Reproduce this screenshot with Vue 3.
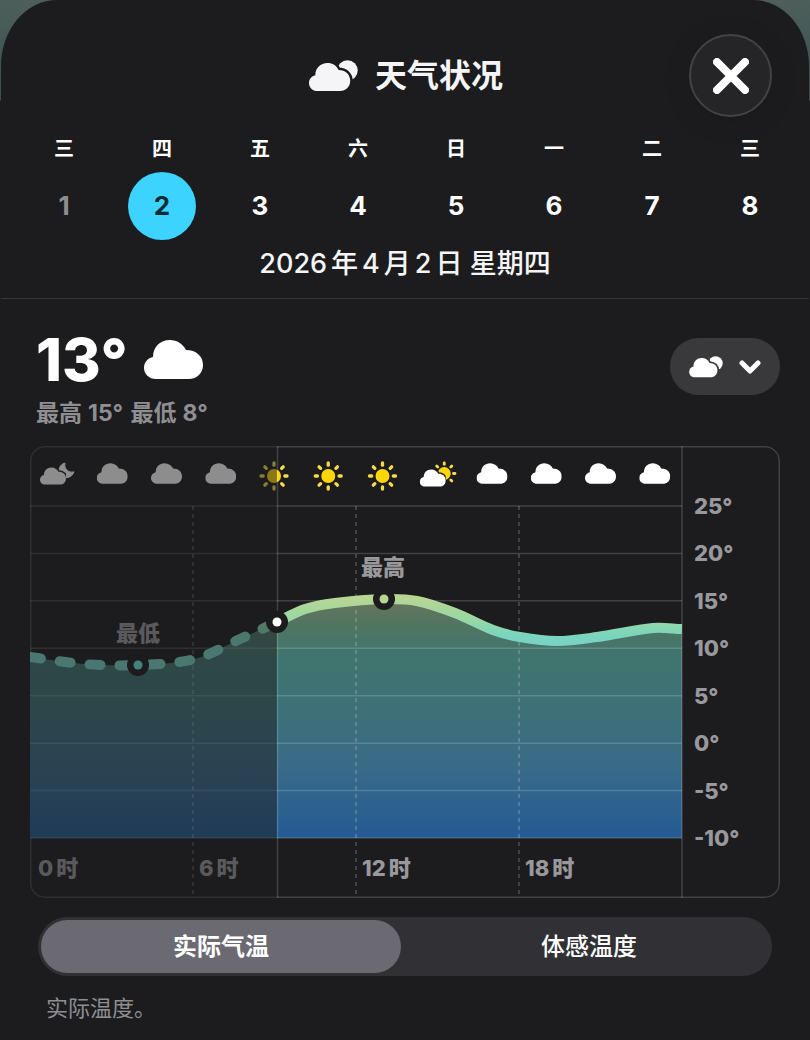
<script setup>
import { ref } from 'vue'

const days = [
  { week: '三', date: 1, past: true },
  { week: '四', date: 2 },
  { week: '五', date: 3 },
  { week: '六', date: 4 },
  { week: '日', date: 5 },
  { week: '一', date: 6 },
  { week: '二', date: 7 },
  { week: '三', date: 8 },
]
const selected = ref(2)
const mode = ref('actual')

const conditions = ['moon', 'cloud', 'cloud', 'cloud', 'sun', 'sun', 'sun', 'partly', 'cloud', 'cloud', 'cloud', 'cloud']
const temps = [25, 20, 15, 10, 5, 0, -5, -10]
const hours = [0, 6, 12, 18]
const gridY = (t) => 392 - ((t + 10) * 332) / 35
const hourX = (h) => (h * 652) / 24

// Temperature samples in chart units
const points = [
  [0, 211], [54, 218], [108, 219], [165, 213], [210, 193], [247, 176], [275, 163], [305, 157],
  [354, 153], [387, 155], [425, 167], [463, 184], [490, 191], [527, 195], [567, 191], [623, 182], [652, 183],
]
const smooth = (list, from, to) => {
  const slope = (i) => {
    const a = list[Math.max(0, i - 1)]
    const b = list[Math.min(list.length - 1, i + 1)]
    return (b[1] - a[1]) / (b[0] - a[0])
  }
  let d = `M${list[from][0]} ${list[from][1]}`
  for (let i = from; i < to; i++) {
    const [x1, y1] = list[i]
    const [x2, y2] = list[i + 1]
    const step = (x2 - x1) / 3
    d += `C${x1 + step} ${y1 + step * slope(i)} ${x2 - step} ${y2 - step * slope(i + 1)} ${x2} ${y2}`
  }
  return d
}
const pastLine = smooth(points, 0, 5)
const nextLine = smooth(points, 5, points.length - 1)
const area = smooth(points, 0, points.length - 1) + 'V392H0Z'
</script>

<template>
  <svg class="symbols" width="0" height="0" aria-hidden="true">
    <symbol id="cloud" viewBox="0 0 59 39">
      <path fill="currentColor" d="M12 39C5 39 0 34 0 28C0 22 4 18 9 17C9 7 16 0 26 0C33 0 39 4 42 10C52 10 59 16 59 25C59 33 53 39 44.500 39Z" />
    </symbol>
    <symbol id="clouds" viewBox="0 0 49 32">
      <circle cx="38.500" cy="10.500" r="10.200" fill="currentColor" />
      <path fill="currentColor" class="cut" stroke-width="5" d="M8.500 31C3.500 31 0 27.500 0 23.200C0 19 2.600 16 6.300 15.200C6.300 8 11.500 3 18.500 3C23.500 3 27.500 5.600 29.600 10C36.500 10 41.200 14.500 41.200 20.800C41.200 26.800 37 31 31 31Z" />
      <path fill="currentColor" d="M8.500 31C3.500 31 0 27.500 0 23.200C0 19 2.600 16 6.300 15.200C6.300 8 11.500 3 18.500 3C23.500 3 27.500 5.600 29.600 10C36.500 10 41.200 14.500 41.200 20.800C41.200 26.800 37 31 31 31Z" />
    </symbol>
    <symbol id="sun" viewBox="-16 -16 32 32">
      <circle r="7" fill="#ffd60a" />
      <path
        v-for="a in 8" :key="a" d="M0 -10.800V-13" :transform="`rotate(${a * 45})`"
        stroke="#f7dc4a" stroke-width="3.300" stroke-linecap="round"
      />
    </symbol>
    <symbol id="partly" viewBox="0 0 38 28">
      <circle cx="24.500" cy="12.500" r="6.500" fill="#ffd60a" />
      <path
        v-for="a in [-45, 0, 45, 90, 135]" :key="a" d="M24.500 3.300V1.800" :transform="`rotate(${a} 24.500 12.500)`"
        stroke="#f7dc4a" stroke-width="2.800" stroke-linecap="round"
      />
      <use href="#cloud" x="0" y="8" width="26" height="18" class="cut" stroke-width="7" />
      <use href="#cloud" x="0" y="8" width="26" height="18" />
    </symbol>
    <symbol id="moon" viewBox="0 0 38 28">
      <path fill="currentColor" stroke="currentColor" stroke-linejoin="round" d="M25 2C19 3.500 17.500 10.500 20.500 14C24.500 18.500 32 17 34 10.800C28.500 12.500 23.500 7.500 25 2Z" />
      <use href="#cloud" x="0" y="6" width="26" height="18" class="cut" stroke-width="7" />
      <use href="#cloud" x="0" y="6" width="26" height="18" />
    </symbol>
  </svg>

  <main class="sheet">
    <header class="header">
      <div class="title-bar">
        <h1 class="title">
          <svg class="title-icon" aria-hidden="true"><use href="#clouds" /></svg>
          天气状况
        </h1>
        <button class="close" type="button" aria-label="关闭">
          <svg viewBox="0 0 36 36" width="36" height="36" aria-hidden="true">
            <path d="M4 4L32 32M32 4L4 32" stroke="#fff" stroke-width="8" stroke-linecap="round" />
          </svg>
        </button>
      </div>
      <div class="days">
        <button
          v-for="d in days" :key="d.date" type="button" class="day"
          :class="{ past: d.past, active: d.date === selected }" @click="selected = d.date"
        >
          <span class="week">{{ d.week }}</span>
          <span class="date">{{ d.date }}</span>
        </button>
      </div>
      <p class="full-date"><span class="num first">2026</span>年<span class="num">4</span>月<span class="num">2</span>日 星期四</p>
    </header>

    <section class="body">
      <div class="summary">
        <div>
          <div class="now">13°<svg class="now-icon" aria-hidden="true"><use href="#cloud" /></svg></div>
          <p class="range">最高<span class="deg">15°</span> 最低<span class="deg">8°</span></p>
        </div>
        <button class="picker" type="button" aria-label="选择天气数据">
          <svg class="picker-icon" aria-hidden="true"><use href="#clouds" /></svg>
          <svg viewBox="0 0 22 14" width="22" height="14" fill="none" aria-hidden="true">
            <path d="M3 3L11 11L19 3" stroke="#fff" stroke-width="5" stroke-linecap="round" stroke-linejoin="round" />
          </svg>
        </button>
      </div>

      <svg class="chart" viewBox="0 0 750 452" role="img" aria-label="每小时气温">
        <defs>
          <linearGradient id="fill" gradientUnits="userSpaceOnUse" x1="0" y1="152" x2="0" y2="392">
            <stop offset="0" stop-color="#6a745a" />
            <stop offset="0.120" stop-color="#4f7562" />
            <stop offset="0.240" stop-color="#40756f" />
            <stop offset="0.480" stop-color="#3d7078" />
            <stop offset="0.700" stop-color="#396b88" />
            <stop offset="1" stop-color="#245a93" />
          </linearGradient>
          <linearGradient id="line" gradientUnits="userSpaceOnUse" x1="0" y1="152" x2="0" y2="196">
            <stop offset="0" stop-color="#b7d694" />
            <stop offset="0.500" stop-color="#98d8a4" />
            <stop offset="0.850" stop-color="#7ad5bd" />
            <stop offset="1" stop-color="#79d3c4" />
          </linearGradient>
          <clipPath id="frame"><rect x="0" y="0" width="750" height="452" rx="15" /></clipPath>
          <clipPath id="plot"><rect x="0" y="0" width="652" height="452" /></clipPath>
        </defs>

        <g clip-path="url(#frame)">
          <rect class="frame" x="0.750" y="0.750" width="748.500" height="450.500" rx="14" />
          <path :d="area" fill="url(#fill)" />
          <path v-for="t in temps" :key="t" class="grid" :d="`M0 ${gridY(t)}H652`" />
          <path v-for="h in hours.slice(1)" :key="h" class="grid dashed" :d="`M${hourX(h)} 60V452`" />
          <path class="grid" d="M652 0V452" />
          <g clip-path="url(#plot)" class="curve">
            <path :d="pastLine" stroke="url(#line)" stroke-dasharray="11 19" stroke-linecap="round" />
            <path :d="nextLine" stroke="url(#line)" />
          </g>

          <template v-for="(c, i) in conditions" :key="i">
            <use v-if="c === 'cloud'" href="#cloud" :x="12.500 + i * 54.250" y="17" width="31" height="21" />
            <use v-else-if="c === 'sun'" href="#sun" :x="11 + i * 54.250" y="14" width="32" height="32" />
            <use v-else :href="'#' + c" :x="10 + i * 54.250" y="15" width="38" height="28" />
          </template>

          <text class="label" x="108" y="195" text-anchor="middle">最低</text>
          <text v-for="h in hours" :key="h" class="label" :x="hourX(h) + (h ? 6 : 8)" y="430">{{ h }}<tspan dx="3">时</tspan></text>
          <rect class="shade" width="247" height="452" />
        </g>

        <text class="label" x="353" y="129" text-anchor="middle">最高</text>
        <text v-for="t in temps" :key="t" class="label" x="664" :y="gridY(t) + 8">{{ t }}°</text>

        <path class="grid" d="M247.500 0V452" />
        <circle class="halo" cx="108" cy="219" r="11" />
        <circle cx="108" cy="219" r="4.500" fill="#45827f" />
        <circle class="halo" cx="247" cy="176" r="11" />
        <circle cx="247" cy="176" r="4.500" fill="#fff" />
        <circle class="halo" cx="354" cy="153" r="11" />
        <circle cx="354" cy="153" r="4.500" fill="#b7d694" />
      </svg>

      <div class="segments" role="radiogroup" aria-label="温度类型">
        <label class="segment" :class="{ on: mode === 'actual' }">
          <input v-model="mode" type="radio" name="mode" value="actual" />实际气温
        </label>
        <label class="segment" :class="{ on: mode === 'feels' }">
          <input v-model="mode" type="radio" name="mode" value="feels" />体感温度
        </label>
      </div>
      <p class="note">实际温度。</p>
    </section>
  </main>
</template>

<style>
body {
  background: linear-gradient(#4e5f5b, #35504e 100px, #1c1c1e 101px);
}
</style>

<style scoped>
.symbols {
  position: absolute;
}
.cut {
  stroke: var(--surface);
}
.sheet {
  --surface: #1c1c1e;
  box-sizing: border-box;
  min-height: 100vh;
  margin: 0 1px;
  border-radius: 56px 56px 0 0 / 66px 66px 0 0;
  background: var(--surface);
  color: #fff;
  font-family: Inter, "Noto Sans CJK SC", sans-serif;
  overflow: hidden;
}
button {
  padding: 0;
  border: 0;
  background: none;
  color: inherit;
  font: inherit;
  cursor: pointer;
}
.header {
  border-bottom: 1px solid #363638;
}
.title-bar {
  display: grid;
  grid-template-columns: 1fr auto 1fr;
  align-items: center;
  padding: 34px 37px 0;
}
.title {
  grid-column: 2;
  display: flex;
  align-items: center;
  gap: 17px;
  margin: 0;
  padding: 1px 0 0 2px;
  color: #f5f5f7;
  font-size: 32px;
  line-height: 40px;
  font-weight: 700;
}
.title-icon {
  width: 49px;
  height: 32px;
}
.close {
  justify-self: end;
  display: grid;
  place-items: center;
  box-sizing: border-box;
  width: 83px;
  height: 83px;
  border: 2px solid #434345;
  border-radius: 50%;
  background: #252527;
  box-shadow: 0 4px 30px rgba(0, 0, 0, 0.1);
}
.days {
  display: grid;
  grid-template-columns: repeat(8, 1fr);
  padding: 17px 10px 0 14px;
}
.day {
  display: flex;
  flex-direction: column;
  align-items: center;
  gap: 7px;
}
.week {
  font-size: 20px;
  line-height: 31px;
  font-weight: 700;
}
.date {
  width: 68px;
  border-radius: 50%;
  font-size: 26px;
  line-height: 68px;
  font-weight: 700;
}
.past .date {
  color: #8e8e90;
}
.active .date {
  background: #3cd3fe;
  color: #0e2a36;
}
.full-date {
  margin: 0;
  padding: 5px 0 15px;
  color: #f5f5f7;
  font-size: 27px;
  line-height: 38px;
  font-weight: 500;
  text-align: center;
}
.num {
  margin: 0 4px;
}
.num.first {
  margin-left: 0;
}
.body {
  padding: 39px 29px 16px;
}
.summary {
  display: flex;
  justify-content: space-between;
  align-items: flex-start;
  padding-left: 6px;
}
.now {
  display: flex;
  align-items: center;
  gap: 16px;
  font-size: 59px;
  line-height: 43px;
  font-weight: 800;
}
.now-icon {
  width: 59px;
  height: 39px;
}
.range {
  margin: 15px 0 16px;
  color: #8e8e93;
  font-size: 23px;
  line-height: 34px;
  font-weight: 700;
}
.deg {
  margin: 0 2px 0 6px;
}
.picker {
  --surface: #39393b;
  display: flex;
  align-items: center;
  justify-content: center;
  gap: 16px;
  width: 110px;
  height: 57px;
  border-radius: 29px;
  background: var(--surface);
}
.picker-icon {
  width: 34px;
  height: 22px;
}
.chart {
  display: block;
  width: 100%;
  height: auto;
}
.frame,
.grid {
  fill: none;
  stroke: rgba(255, 255, 255, 0.17);
  stroke-width: 1.5px;
}
.dashed {
  stroke: rgba(255, 255, 255, 0.24);
  stroke-dasharray: 4 4;
}
.curve {
  fill: none;
  stroke-width: 10px;
}
.label {
  fill: #98989d;
  font-size: 22px;
  font-weight: 800;
}
.shade {
  fill: var(--surface);
  opacity: 0.5;
}
.halo {
  fill: var(--surface);
}
.segments {
  display: flex;
  gap: 8px;
  margin: 19px 8px 0;
  padding: 3px;
  border-radius: 30px;
  background: #313135;
}
.segment {
  flex: 1;
  box-sizing: border-box;
  height: 53px;
  padding-top: 1px;
  border-radius: 27px;
  font-size: 24px;
  line-height: 52px;
  font-weight: 500;
  text-align: center;
  cursor: pointer;
}
.segment.on {
  background: #6b6972;
  font-weight: 600;
}
.segment input {
  appearance: none;
  position: absolute;
  margin: 0;
}
.note {
  margin: 15px 16px 0;
  color: #8e8e93;
  font-size: 22px;
  line-height: 34px;
}
</style>
